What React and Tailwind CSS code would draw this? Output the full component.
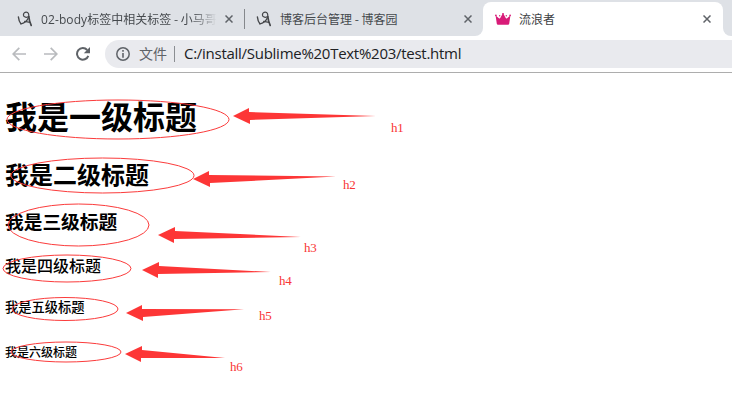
import React from "react";

const CJK = "font-['Noto_Sans_CJK_SC',sans-serif]";

function Close({ className = "" }) {
  return (
    <svg className={`h-[8px] w-[8px] shrink-0 ${className}`} viewBox="0 0 8 8" stroke="#5f6368" strokeWidth="1.5">
      <path d="M0.5 0.5L7.5 7.5M7.5 0.5L0.5 7.5" />
    </svg>
  );
}

function BlogIcon() {
  return (
    <svg className="h-4 w-4 shrink-0" viewBox="0 0 16 16" fill="none" stroke="#45474a" strokeLinecap="round">
      <path d="M1.4 6C1.7 8.8 2.6 11.4 3.9 12.8" strokeWidth="1.4" />
      <path d="M3.9 12.8C7 12.6 10.6 9.9 11.6 6" strokeWidth="1.2" />
      <path d="M11.6 5.4C10.2 6.8 6.4 6.6 6.4 4C6.4 2.2 7.8 1.2 9.2 1.2C11.6 1.2 11.9 3.4 11.8 5.6" strokeWidth="1.2" />
      <path d="M11.8 5.5C12.1 8.8 13 11.8 14.2 14.4" strokeWidth="1.7" />
      <path d="M7.6 10.4L13 11.3" strokeWidth="1.2" />
    </svg>
  );
}

function Crown() {
  return (
    <svg className="h-3 w-4 shrink-0" viewBox="0 0 16 12" fill="#d81b78">
      <path d="M.6 2.4L4.2 5.4Q5 5.6 5.4 4.8L7.2 1.5H8.8L10.6 4.8Q11 5.6 11.8 5.4L15.4 2.4L14.2 10.7Q14 11.7 13 11.7H3Q2 11.7 1.8 10.7Z" />
      <circle cx=".9" cy="2.3" r=".9" />
      <circle cx="4.7" cy="2.8" r=".7" />
      <circle cx="8" cy="1.1" r="1" />
      <circle cx="11.3" cy="2.8" r=".7" />
      <circle cx="15.1" cy="2.3" r=".9" />
    </svg>
  );
}

function TabStrip() {
  return (
    <div className={`flex h-9 bg-white text-[12px] leading-5 text-[#45494d] ${CJK}`}>
      <div className="flex h-9 w-[483px] shrink-0 rounded-br-lg bg-[#dee1e6]">
        <div className="flex w-[244px] items-center pb-[1px] pl-[17px] pt-[3px]">
          <BlogIcon />
          <div className="ml-2 w-[176px] shrink-0 overflow-hidden whitespace-nowrap [mask-image:linear-gradient(to_right,black_150px,transparent_176px)]">
            <span className="font-['Open_Sans','Noto_Sans_CJK_SC',sans-serif] tracking-[0.1px]">02-body</span>标签中相关标签 - 小马哥
          </div>
          <Close className="ml-[8px]" />
        </div>
        <div className="mt-[9px] h-5 w-px bg-[#85888c]" />
        <div className="flex flex-1 items-center pb-[1px] pl-[11px] pt-[3px]">
          <BlogIcon />
          <div className="ml-2 w-[176px] shrink-0 whitespace-nowrap">博客后台管理 - 博客园</div>
          <Close className="ml-[8px]" />
        </div>
      </div>
      <div className="h-9 w-[240px] shrink-0 bg-[#dee1e6]">
        <div className="mt-[2px] flex h-[34px] items-center rounded-t-lg bg-white pl-3">
          <Crown />
          <div className="ml-2 w-[176px] shrink-0 text-[#3c4043]">流浪者</div>
          <Close className="ml-[8px]" />
        </div>
      </div>
      <div className="h-9 flex-1 rounded-bl-lg bg-[#dee1e6]" />
    </div>
  );
}

function Toolbar() {
  return (
    <div className="flex h-[37px] items-start border-b border-[#adadad] bg-white pt-1">
      <div className="flex h-7 w-[105px] shrink-0 items-center pl-3">
        <svg className="h-[14px] w-[14px]" viewBox="0 0 14 14" fill="none" stroke="#b9bbbe" strokeWidth="1.7">
          <path d="M14 7H1.3M7.3 .8L1.2 7L7.3 13.2" />
        </svg>
        <svg className="ml-[18px] h-[14px] w-[14px]" viewBox="0 0 14 14" fill="none" stroke="#b9bbbe" strokeWidth="1.7">
          <path d="M0 7H12.7M6.7 .8L12.8 7L6.7 13.2" />
        </svg>
        <svg className="ml-[18px] h-[14px] w-[14px]" viewBox="0 0 14 14" fill="none">
          <path d="M12.3 8.8A5.8 5.8 0 1 1 11.2 3" stroke="#5f6368" strokeWidth="2" />
          <path d="M14 0V6.2H7.8Z" fill="#5f6368" />
        </svg>
      </div>
      <div className="flex h-7 flex-1 items-center rounded-l-full bg-[#e9eaee] pl-[11px]">
        <svg className="h-[14px] w-[14px] shrink-0" viewBox="0 0 14 14">
          <circle cx="7" cy="7" r="6.2" fill="none" stroke="#5f6368" strokeWidth="1.5" />
          <path d="M7 3.1V4.8M7 6V10.7" stroke="#5f6368" strokeWidth="1.6" />
        </svg>
        <span className={`mb-[2px] ml-[9px] w-[28px] text-[14px] leading-5 text-[#5f6368] ${CJK}`}>文件</span>
        <span className="ml-[7px] h-4 w-px bg-[#8b8e92]" />
        <span className="mb-[2px] ml-[9px] whitespace-nowrap font-['Open_Sans',sans-serif] text-[15px] leading-5 tracking-[-0.27px] text-[#202124]">
          C:/install/Sublime%20Text%203/test.html
        </span>
      </div>
    </div>
  );
}

const notes = [
  { cx: 118, cy: 119.5, rx: 111, ry: 19.5, arrow: "233,116 249,108 249,112 376,116 250,120 250,124" },
  { cx: 102.5, cy: 175.5, rx: 91.5, ry: 17.5, arrow: "193,179 209,171 209,175 336,176.5 210,183 210,187" },
  { cx: 78.5, cy: 225, rx: 70.5, ry: 21, arrow: "158,235 175,227 175,231 301,237 174,239 174,243" },
  { cx: 67, cy: 268.5, rx: 64, ry: 13.5, arrow: "142,270 159,262 159,266 271,272 158,274 158,278" },
  { cx: 65, cy: 309, rx: 53, ry: 11.5, arrow: "126,313 142,305 142,309 244,309.3 143,317 143,321" },
  { cx: 66, cy: 352, rx: 55, ry: 10, arrow: "125,354 142,346 142,350 225,358 141,358 141,362" },
];

function Annotations() {
  return (
    <div className="pointer-events-none absolute left-0 top-0 h-[414px] w-[732px] font-['Liberation_Serif',serif] text-[13px] leading-4 tracking-[-0.3px] text-[#f93535]">
      <svg className="h-full w-full" viewBox="0 0 732 414">
        {notes.map((n) => (
          <g key={n.cy}>
            <ellipse cx={n.cx} cy={n.cy} rx={n.rx} ry={n.ry} fill="none" stroke="#fb3b3b" strokeWidth="1" />
            <polygon points={n.arrow} fill="#fd3636" />
          </g>
        ))}
      </svg>
      <span className="absolute left-[391px] top-[120px]">h1</span>
      <span className="absolute left-[343px] top-[177px]">h2</span>
      <span className="absolute left-[304px] top-[240px]">h3</span>
      <span className="absolute left-[279px] top-[273px]">h4</span>
      <span className="absolute left-[259px] top-[308px]">h5</span>
      <span className="absolute left-[230px] top-[359px]">h6</span>
    </div>
  );
}

export default function App() {
  return (
    <div className="relative h-[414px] w-[732px] overflow-hidden bg-white">
      <TabStrip />
      <Toolbar />
      <main className={`flex flex-col whitespace-nowrap pl-[5px] pt-[22px] font-bold text-black ${CJK}`}>
        <h1 className="text-[32px] leading-[40px]">我是一级标题</h1>
        <h2 className="mt-[23px] text-[24px] leading-[32px]">我是二级标题</h2>
        <h3 className="mt-[19px] text-[18.72px] leading-[24px]">我是三级标题</h3>
        <h4 className="mt-[21px] text-[16px] font-medium leading-[22px]">我是四级标题</h4>
        <h5 className="mt-[21px] text-[13.28px] font-medium leading-[20px]">我是五级标题</h5>
        <h6 className="mt-[25px] text-[12px] font-medium leading-[20px]">我是六级标题</h6>
      </main>
      <Annotations />
    </div>
  );
}
